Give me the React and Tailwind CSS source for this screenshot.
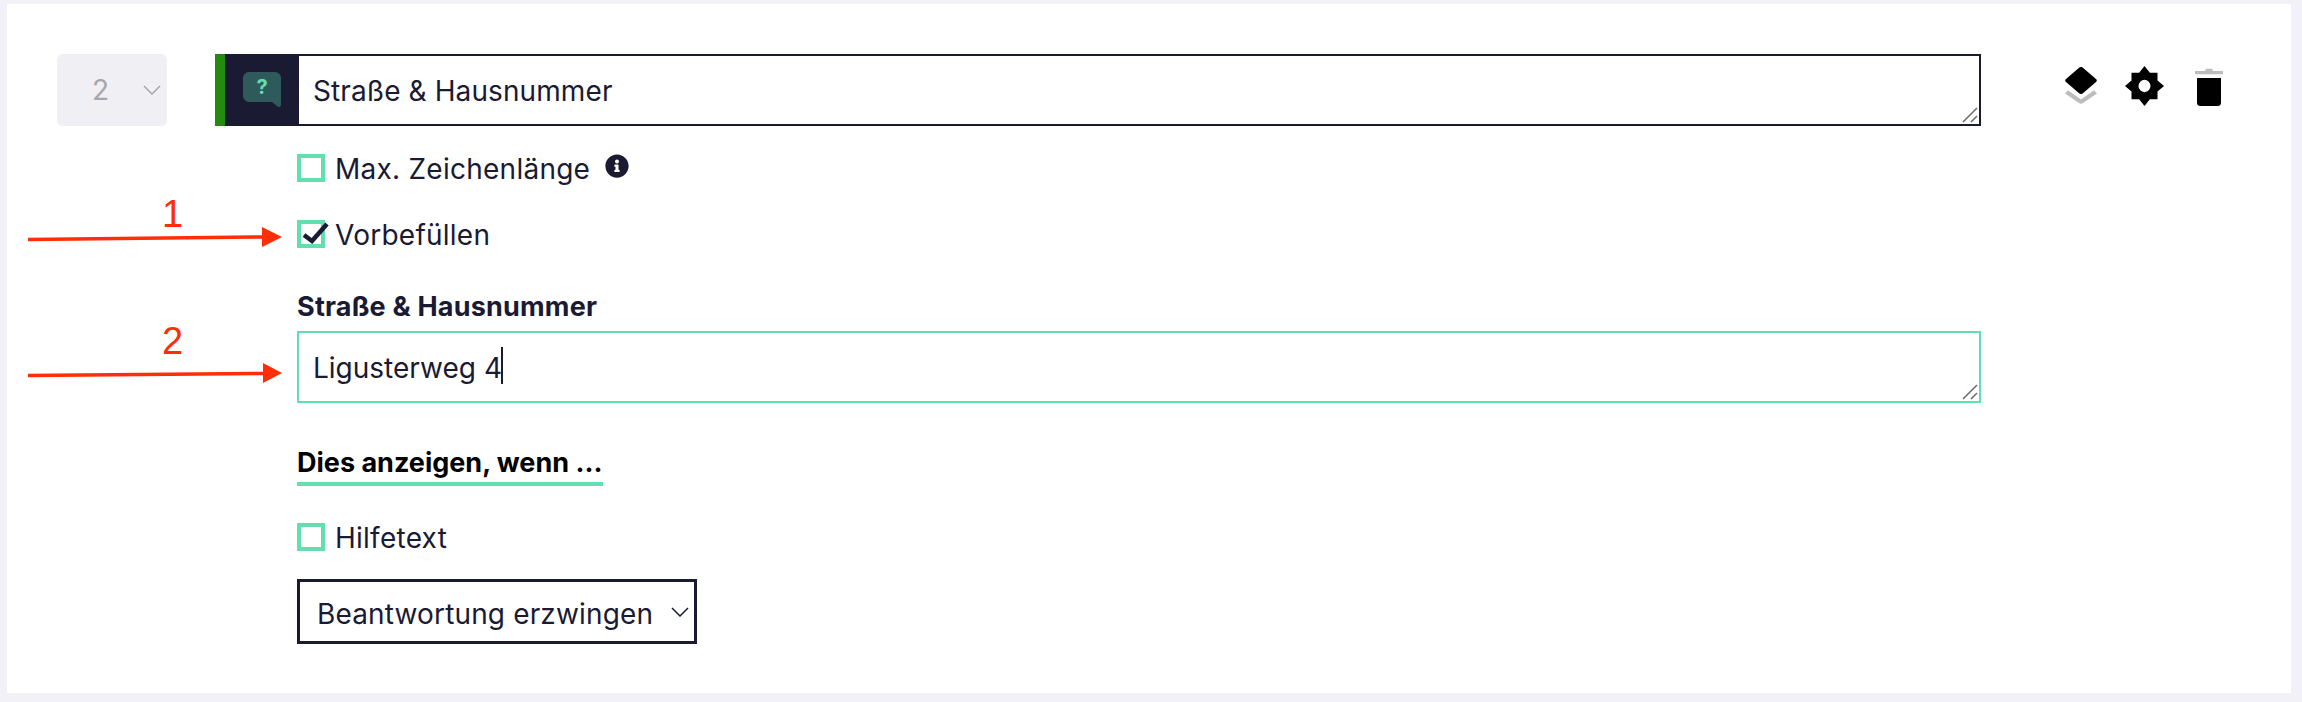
import { FaInfoCircle } from "react-icons/fa";

const font = "font-['Inter','Liberation_Sans',sans-serif]";

function Chevron({ className }) {
  return (
    <svg className={className} viewBox="0 0 18 10" fill="none" stroke="currentColor" strokeWidth="1.5">
      <path d="M1 1l8 8 8-8" />
    </svg>
  );
}

function Grip() {
  return (
    <svg className="absolute right-[3px] bottom-[3px] w-4 h-4 pointer-events-none" viewBox="0 0 16 16" stroke="#6a6a6a" strokeWidth="1.5">
      <path d="M1 15L15 1M9 15l6-6" />
    </svg>
  );
}

function Checkbox({ label, checked, children }) {
  return (
    <div className="flex items-center h-7">
      <div className="relative w-7 h-7 shrink-0 border-[4px] border-[#62dfae] bg-white">
        {checked && (
          <svg className="absolute left-[1px] top-[-2px] w-[27px] h-[23px]" viewBox="0 0 27 23" fill="none" stroke="#1a1a33" strokeWidth="4.5">
            <path d="M2 13l8 6L25 2" />
          </svg>
        )}
      </div>
      <span className="ml-[10px] pt-px text-[28px] tracking-[0.25px] leading-7 text-[#1a1a33]">{label}</span>
      {children}
    </div>
  );
}

function LayersIcon() {
  return (
    <svg width="32" height="37" viewBox="0 0 32 37">
      <path d="M13.8 1a3.2 3.2 0 0 1 4.4 0l12.8 11a2 2 0 0 1 0 3L18.2 26a3.2 3.2 0 0 1-4.4 0L1 15a2 2 0 0 1 0-3z" fill="#000" />
      <path d="M0 26.5l3-3.2 13 9.2 13-9.2 3 3.2-14 9.6a3.4 3.4 0 0 1-4 0z" fill="#bdbdbd" />
    </svg>
  );
}

function GearIcon() {
  return (
    <svg width="39" height="40" viewBox="0 0 24 24" preserveAspectRatio="none">
      <path fillRule="evenodd" d="M20 15.31L24 12l-4-3.31V4h-4.69L12 0 8.69 4H4v4.69L0 12l4 3.31V20h4.69L12 24l3.31-4H20v-4.69zM12 15.7a3.7 3.7 0 1 1 0-7.4 3.7 3.7 0 0 1 0 7.4z" fill="#000" />
    </svg>
  );
}

function TrashIcon() {
  return (
    <svg width="28" height="38" viewBox="0 0 28 38">
      <path d="M0 3h10l1-2.2h6L18 3h10v3.2H0z" fill="#bdbdbd" />
      <path d="M2 10h24v24.5a3.5 3.5 0 0 1-3.5 3.5h-17A3.5 3.5 0 0 1 2 34.5z" fill="#000" />
    </svg>
  );
}

function Arrows() {
  return (
    <>
      <svg className="absolute left-0 top-0 pointer-events-none" width="300" height="400" viewBox="0 0 300 400">
        <path d="M28 239.5L264 237M28 375.5L264 373.5" stroke="#ff2d0a" strokeWidth="3.5" fill="none" />
        <path d="M262 227l20 10-20 10zM263 363l19 10-19 10z" fill="#ff2d0a" />
      </svg>
      <div className="absolute left-[162px] top-[194px] text-[38px] leading-10 text-[#ff2d0a] font-['Liberation_Sans',sans-serif]">1</div>
      <div className="absolute left-[162px] top-[321px] text-[38px] leading-10 text-[#ff2d0a] font-['Liberation_Sans',sans-serif]">2</div>
    </>
  );
}

export default function App() {
  return (
    <div className={`relative w-[2302px] h-[702px] bg-[#f1f1f7] pl-[7px] pr-[11px] pt-1 pb-[9px] ${font}`}>
      <div className="flex h-full bg-white pt-[50px] pl-[50px]">
        <div className="relative w-[110px] h-[72px] rounded-md bg-[#efeff4] shrink-0">
          <select disabled className="w-full h-full appearance-none bg-transparent pl-[35px] text-[28px] text-[#a6a6ab]">
            <option>2</option>
          </select>
          <Chevron className="absolute left-[86px] top-[31px] w-[18px] h-[10px] text-[#a6a6ab]" />
        </div>

        <div className="w-[1766px] ml-[48px] shrink-0">
          <div className="flex h-[72px]">
            <div className="w-[10px] bg-[#258a10]" />
            <div className="w-[74px] bg-[#1a1a33] flex items-start justify-center pt-[18px]">
              <svg width="38" height="35" viewBox="0 0 38 35">
                <path d="M6 0h26a6 6 0 0 1 6 6v27a2 2 0 0 1-3.4 1.4L29 30H6a6 6 0 0 1-6-6V6a6 6 0 0 1 6-6z" fill="#2f5a5c" />
                <text x="19" y="22" textAnchor="middle" fontSize="20" fontWeight="700" fill="#62dfae" fontFamily="Inter, sans-serif">?</text>
              </svg>
            </div>
            <div className="relative flex-1 h-full">
              <textarea
                readOnly
                defaultValue="Straße & Hausnummer"
                className="block w-full h-full resize-none border-2 border-l-0 border-[#1a1a33] bg-white pl-[14px] pt-[17px] text-[28px] tracking-[0.1px] leading-9 text-[#1a1a33] outline-none"
              />
              <Grip />
            </div>
          </div>

          <div className="ml-[82px] mt-7">
            <Checkbox label="Max. Zeichenlänge">
              <FaInfoCircle className="ml-[15px] -mt-1 w-6 h-6 text-[#1a1a33]" />
            </Checkbox>
            <div className="mt-[38px]">
              <Checkbox label="Vorbefüllen" checked />
            </div>

            <div className="mt-[43px] text-[27px] tracking-[0.2px] leading-8 font-bold text-[#1a1a33]">Straße & Hausnummer</div>
            <div className="relative mt-[8px] h-[72px]">
              <textarea
                readOnly
                defaultValue="Ligusterweg 4"
                className="block w-full h-full resize-none border-2 border-[#62dfae] bg-white pl-[14px] pt-[17px] text-[28px] leading-9 text-[#1a1a33] outline-none"
              />
              <div className="absolute left-[204px] top-[16px] w-[2px] h-[37px] bg-[#1a1a33]" />
              <Grip />
            </div>

            <div className="mt-[42px] inline-block border-b-4 border-[#62dfae] pb-px text-[27px] leading-9 font-bold text-[#000]">
              Dies anzeigen, wenn ...
            </div>

            <div className="mt-[37px]">
              <Checkbox label="Hilfetext" />
            </div>

            <div className="relative mt-[28px] w-[400px] h-[65px]">
              <select disabled className="w-full h-full appearance-none border-[3px] border-[#1a1a33] bg-white pl-[17px] pt-1 text-[28px] tracking-[0.15px] text-[#1a1a33] opacity-100">
                <option>Beantwortung erzwingen</option>
              </select>
              <Chevron className="absolute left-[374px] top-[28px] w-[18px] h-[10px] text-[#1a1a33]" />
            </div>
          </div>
        </div>

        <div className="flex ml-[84px] gap-[28px] h-fit items-start pt-[12px]">
          <div className="pt-px"><LayersIcon /></div>
          <GearIcon />
          <div className="ml-[3px] pt-[2px]"><TrashIcon /></div>
        </div>
      </div>
      <Arrows />
    </div>
  );
}
